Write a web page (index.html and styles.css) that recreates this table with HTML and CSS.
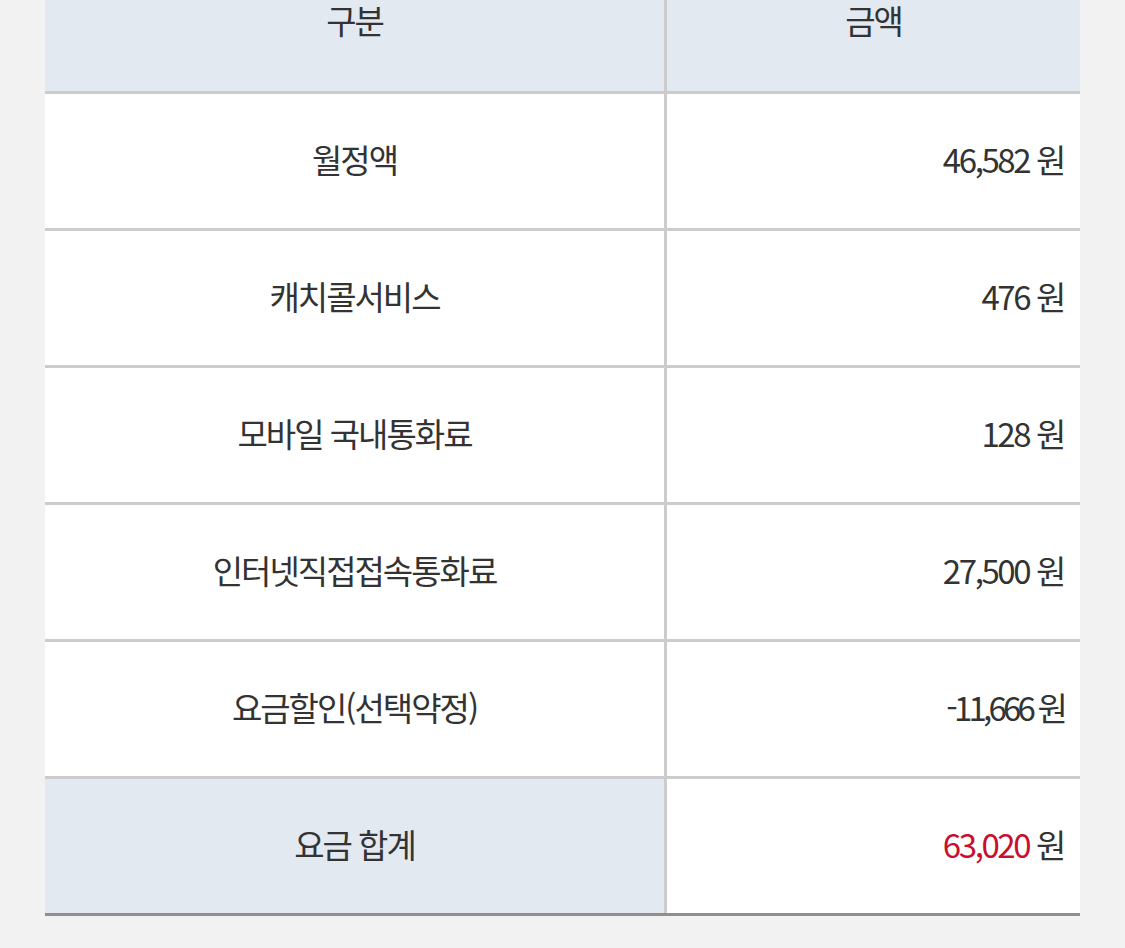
FILE: index.html
```html
<!DOCTYPE html>
<html lang="ko">
<head>
<meta charset="utf-8">
<link rel="stylesheet" href="styles.css">
</head>
<body>
<div class="wrap">
  <table class="fee">
    <thead>
      <tr><th>구분</th><th>금액</th></tr>
    </thead>
    <tbody>
      <tr><td class="name">월정액</td><td class="amt">46,582 원</td></tr>
      <tr><td class="name">캐치콜서비스</td><td class="amt">476 원</td></tr>
      <tr><td class="name">모바일 국내통화료</td><td class="amt">128 원</td></tr>
      <tr><td class="name">인터넷직접접속통화료</td><td class="amt">27,500 원</td></tr>
      <tr><td class="name">요금할인(선택약정)</td><td class="amt narrow">-11,666 원</td></tr>
      <tr class="total"><td class="name">요금 합계</td><td class="amt"><span class="red">63,020</span> 원</td></tr>
    </tbody>
  </table>
</div>
</body>
</html>
```

FILE: styles.css
```css
html, body {
  margin: 0;
  padding: 0;
  background: #f2f2f2;
  height: 100%;
  overflow: hidden;
}
.wrap {
  padding: 0 45px;
  margin-top: -41px;
}
.fee {
  width: 1035px;
  border-collapse: collapse;
  table-layout: fixed;
  font-family: "Noto Sans CJK KR", "Noto Sans", sans-serif;
  font-size: 33px;
  letter-spacing: -2px;
  color: #333;
}
.fee th, .fee td {
  height: 130px;
  padding: 0 0 4px 0;
  font-weight: 400;
  border-top: 3px solid #cccccc;
  border-bottom: 3px solid #cccccc;
  vertical-align: middle;
}
.fee th {
  background: #e3e9f1;
  height: 122px;
  padding-bottom: 10px;
  border-top: none;
  border-bottom: 3px solid #cccccc;
  text-align: center;
}
.fee th:first-child, .fee td:first-child {
  width: 619px;
  border-right: 3px solid #cccccc;
}
.fee td { background: #fff; }
.fee td.name { text-align: center; }
.fee td.amt {
  text-align: right;
  padding-right: 16px;
  font-feature-settings: "pnum" 1;
  letter-spacing: -2.4px;
}
.fee td.amt.narrow { letter-spacing: -3.8px; }
.fee tr.total td { border-bottom: 3px solid #8f8f8f; }
.fee tr.total td.name { background: #e3e9f1; }
.red { color: #c8102e; }
```
